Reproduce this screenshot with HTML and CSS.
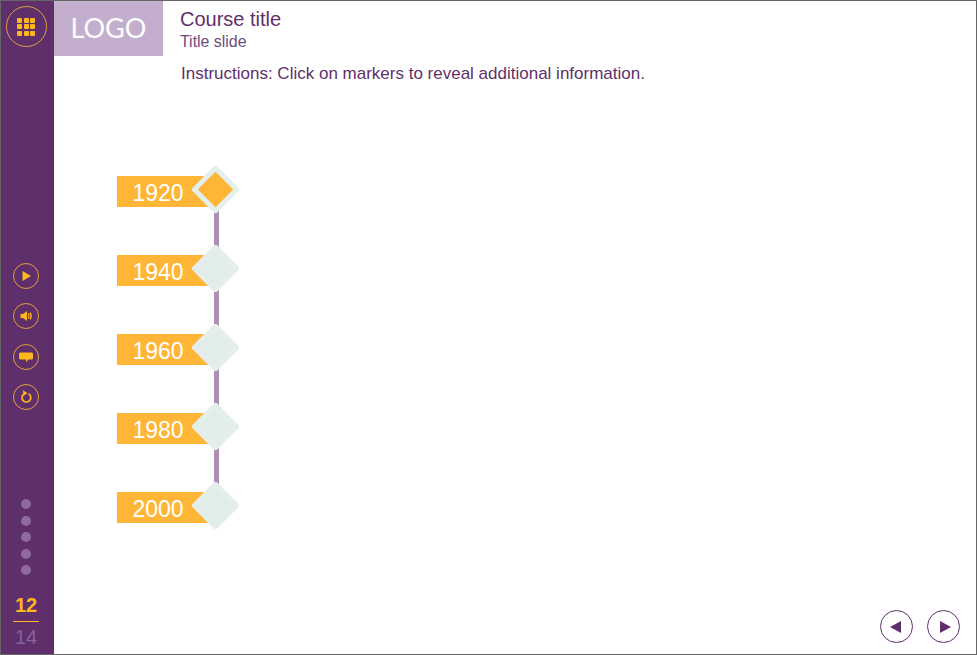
FILE: index.html
```html
<!DOCTYPE html>
<html lang="en">

<head>
  <meta charset="UTF-8">
  <meta name="viewport" content="width=device-width, initial-scale=1.0">
  <title>Course title</title>
  <link rel="stylesheet" href="styles.css">
</head>

<body>
  <div class="frame">
    <aside class="sidebar">
      <button class="menu-button" aria-label="Menu">
        <span class="menu-grid">
          <i></i><i></i><i></i>
          <i></i><i></i><i></i>
          <i></i><i></i><i></i>
        </span>
      </button>

      <div class="controls">
        <button class="control" aria-label="Play">
          <svg viewBox="0 0 16 16" width="16" height="16"><path d="M4.5 3 13 8 4.5 13z" fill="#ffb81c" /></svg>
        </button>
        <button class="control" aria-label="Audio">
          <svg viewBox="0 0 16 16" width="16" height="16">
            <path d="M2.5 6H5L9 3V13L5 10H2.5z" fill="#ffb81c" />
            <path d="M10.4 5.2C11.2 7 11.2 9 10.4 10.8M12.2 4.6C13.2 6.4 13.2 9.6 12.2 11.4" fill="none" stroke="#ffb81c" stroke-width="1.2" />
          </svg>
        </button>
        <button class="control" aria-label="Captions">
          <svg viewBox="0 0 16 16" width="16" height="16"><path d="M2.5 3.5H13.5Q15 3.5 15 5V9Q15 10.5 13.5 10.5H10.5L8 13V10.5H2.5Q1 10.5 1 9V5Q1 3.5 2.5 3.5z" fill="#ffb81c" /></svg>
        </button>
        <button class="control" aria-label="Replay">
          <svg viewBox="0 0 16 16" width="16" height="16">
            <path d="M5.6 5.2A4.4 4.4 0 1 0 10.6 4.8" fill="none" stroke="#ffb81c" stroke-width="1.7" />
            <path d="M5 1.2 9.4 4 5.4 7z" fill="#ffb81c" />
          </svg>
        </button>
      </div>

      <div class="dots">
        <span></span><span></span><span></span><span></span><span></span>
      </div>

      <div class="pager">
        <div class="pager-current">12</div>
        <div class="pager-total">14</div>
      </div>
    </aside>

    <main class="main">
      <header class="header">
        <div class="logo">LOGO</div>
        <div class="titles">
          <h1 class="course-title">Course title</h1>
          <h2 class="slide-title">Title slide</h2>
          <p class="instructions">Instructions: Click on markers to reveal additional information.</p>
        </div>
      </header>

      <div class="timeline">
        <div class="timeline-item">
          <div class="year">1920</div>
          <div class="marker active"></div>
        </div>
        <div class="timeline-item">
          <div class="year">1940</div>
          <div class="marker"></div>
        </div>
        <div class="timeline-item">
          <div class="year">1960</div>
          <div class="marker"></div>
        </div>
        <div class="timeline-item">
          <div class="year">1980</div>
          <div class="marker"></div>
        </div>
        <div class="timeline-item">
          <div class="year">2000</div>
          <div class="marker"></div>
        </div>
      </div>

      <footer class="nav">
        <button class="nav-button" aria-label="Previous">
          <svg viewBox="0 0 14 14" width="14" height="14"><path d="M11 1V13L0 7z" fill="#5f2f6b" /></svg>
        </button>
        <button class="nav-button" aria-label="Next">
          <svg viewBox="0 0 14 14" width="14" height="14"><path d="M3 1V13L14 7z" fill="#5f2f6b" /></svg>
        </button>
      </footer>
    </main>
  </div>
</body>

</html>
```

FILE: styles.css
```css
* {
  margin: 0;
  padding: 0;
  box-sizing: border-box;
  font-family: 'Liberation Sans', Arial, sans-serif;
}

html,
body {
  height: 100%;
  overflow: hidden;
  background: #fff;
}

button {
  background: none;
  cursor: pointer;
}

.frame {
  width: 977px;
  height: 655px;
  border: 1px solid #666;
  display: flex;
}

/* Sidebar */
.sidebar {
  width: 53px;
  flex-shrink: 0;
  background: #5f2f6b;
  padding-right: 3px;
  display: flex;
  flex-direction: column;
  align-items: center;
}

.menu-button {
  width: 41px;
  height: 41px;
  margin-top: 5px;
  border: 1px solid #e0a33a;
  border-radius: 50%;
  display: flex;
  align-items: center;
  justify-content: center;
}

.menu-grid {
  display: grid;
  grid-template-columns: repeat(3, 5px);
  grid-auto-rows: 5px;
  gap: 1.5px;
}

.menu-grid i {
  background: #ffb81c;
  border-radius: 1px;
}

.controls {
  margin-top: 216px;
  display: flex;
  flex-direction: column;
  gap: 14.33px;
}

.control {
  width: 26px;
  height: 26px;
  border: 1px solid #e0a33a;
  border-radius: 50%;
  display: flex;
  align-items: center;
  justify-content: center;
}

.dots {
  margin-top: 89.5px;
  display: flex;
  flex-direction: column;
  gap: 6.5px;
}

.dots span {
  width: 10px;
  height: 10px;
  border-radius: 50%;
  background: #8f6a9f;
}

.pager {
  margin-top: 17.51px;
  width: 26px;
  text-align: center;
  font-size: 20px;
  line-height: 24px;
}

.pager-current {
  color: #ffb81c;
  font-weight: bold;
  padding-bottom: 4px;
  border-bottom: 1px solid #ffb81c;
}

.pager-total {
  color: #85629a;
  padding-top: 3px;
}

/* Main area */
.main {
  flex-grow: 1;
  display: flex;
  flex-direction: column;
  min-width: 0;
}

.header {
  display: flex;
}

.logo {
  width: 109px;
  height: 55px;
  background: #c4aecd;
  color: #fff;
  font-family: Lato, sans-serif;
  font-size: 27px;
  line-height: 53px;
  text-align: center;
}

.titles {
  padding: 7px 0 0 17px;
  color: #5f2f6b;
}

.course-title {
  font-size: 20px;
  font-weight: normal;
  line-height: 22px;
}

.slide-title {
  font-size: 15.9px;
  font-weight: normal;
  line-height: 18px;
  margin-top: 3px;
  color: #6f4a7d;
}

.instructions {
  font-size: 17px;
  line-height: 20px;
  margin-top: 13px;
  margin-left: 1px;
}

/* Timeline */
.timeline {
  margin: 92px 0 0 63px;
  display: flex;
  flex-direction: column;
  gap: 48px;
}

.timeline-item {
  position: relative;
  width: 98px;
  height: 31px;
}

/* connector down to the next marker */
.timeline-item:not(:last-child)::after {
  content: "";
  position: absolute;
  left: 97px;
  top: 24px;
  width: 5px;
  height: 60px;
  background: #ad8fb5;
}

.year {
  height: 31px;
  background: #ffb535;
  color: #fff;
  font-size: 23px;
  line-height: 35px;
  padding-left: 15.5px;
}

.marker {
  position: absolute;
  left: 80.5px;
  top: -4.5px;
  width: 35px;
  height: 35px;
  background: #e0ede9;
  border: 5px solid #e4efeb;
  border-radius: 3px;
  transform: rotate(45deg);
  z-index: 1;
}

.marker.active {
  background: #ffb535;
}

/* Prev / next */
.nav {
  margin-top: auto;
  padding: 0 16px 11px 0;
  display: flex;
  justify-content: flex-end;
  gap: 14px;
}

.nav-button {
  width: 33px;
  height: 33px;
  border: 1px solid #5f2f6b;
  border-radius: 50%;
  display: flex;
  align-items: center;
  justify-content: center;
}
```
